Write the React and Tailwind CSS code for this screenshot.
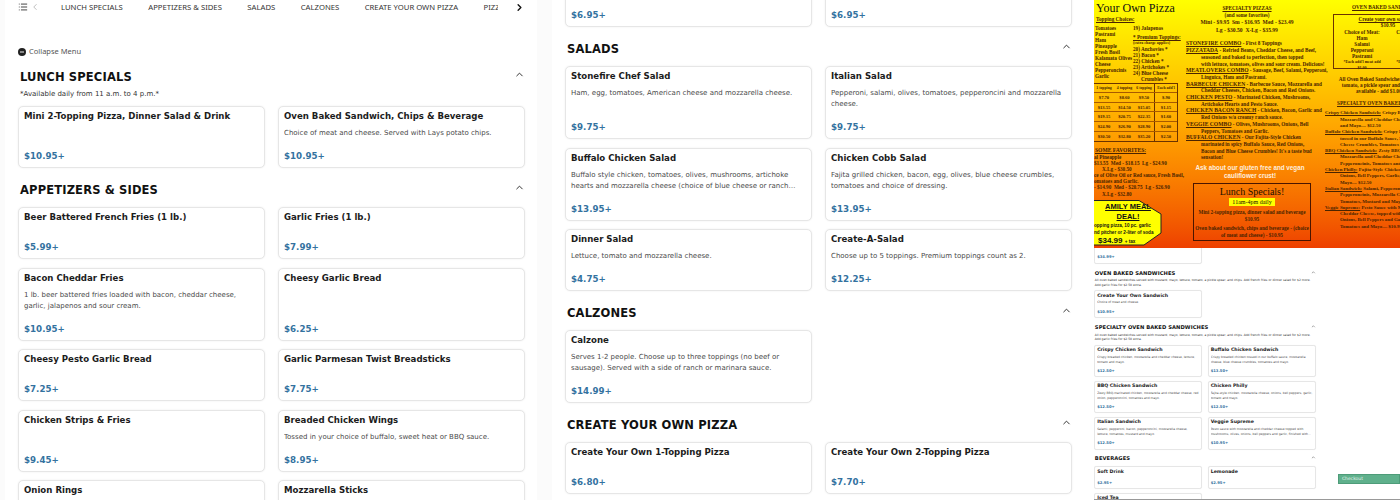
import { ChevronLeft, ChevronRight, ChevronUp, List } from "lucide-react";

const navItems = ["LUNCH SPECIALS", "APPETIZERS & SIDES", "SALADS", "CALZONES", "CREATE YOUR OWN PIZZA", "PIZZAS"];

const appetizers = [
  { name: "Beer Battered French Fries (1 lb.)", price: "$5.99+" },
  { name: "Garlic Fries (1 lb.)", price: "$7.99+" },
  {
    name: "Bacon Cheddar Fries",
    desc: "1 lb. beer battered fries loaded with bacon, cheddar cheese, garlic, jalapenos and sour cream.",
    price: "$10.95+",
  },
  { name: "Cheesy Garlic Bread", price: "$6.25+" },
  { name: "Cheesy Pesto Garlic Bread", price: "$7.25+" },
  { name: "Garlic Parmesan Twist Breadsticks", price: "$7.75+" },
  { name: "Chicken Strips & Fries", price: "$9.45+" },
  { name: "Breaded Chicken Wings", desc: "Tossed in your choice of buffalo, sweet heat or BBQ sauce.", price: "$8.95+" },
  { name: "Onion Rings", price: "$6.95+" },
  { name: "Mozzarella Sticks", price: "$6.95+" },
];

const salads = [
  { name: "Stonefire Chef Salad", desc: "Ham, egg, tomatoes, American cheese and mozzarella cheese.", price: "$9.75+" },
  { name: "Italian Salad", desc: "Pepperoni, salami, olives, tomatoes, pepperoncini and mozzarella cheese.", price: "$9.75+" },
  {
    name: "Buffalo Chicken Salad",
    desc: "Buffalo style chicken, tomatoes, olives, mushrooms, artichoke hearts and mozzarella cheese (choice of blue cheese or ranch dressing).",
    price: "$13.95+",
  },
  {
    name: "Chicken Cobb Salad",
    desc: "Fajita grilled chicken, bacon, egg, olives, blue cheese crumbles, tomatoes and choice of dressing.",
    price: "$13.95+",
  },
  { name: "Dinner Salad", desc: "Lettuce, tomato and mozzarella cheese.", price: "$4.75+" },
  { name: "Create-A-Salad", desc: "Choose up to 5 toppings. Premium toppings count as 2.", price: "$12.25+" },
];

const sandwichNote =
  "All oven baked sandwiches served with mustard, mayo, lettuce, tomato, a pickle spear, and chips. Add french fries or dinner salad for $2 more. Add garlic fries for $2.50 extra.";

const specialtySandwiches = [
  { name: "Crispy Chicken Sandwich", desc: "Crispy breaded chicken, mozzarella and cheddar cheese, lettuce, tomato and mayo.", price: "$12.50+" },
  { name: "Buffalo Chicken Sandwich", desc: "Crispy breaded chicken tossed in our buffalo sauce, mozzarella cheese, blue cheese crumbles, tomatoes and mayo.", price: "$13.50+" },
  { name: "BBQ Chicken Sandwich", desc: "Zesty BBQ-marinated chicken, mozzarella and cheddar cheese, red onion, pepperoncini, tomatoes and mayo.", price: "$12.50+" },
  { name: "Chicken Philly", desc: "Fajita-style chicken, mozzarella cheese, onions, bell peppers, garlic, tomato and mayo.", price: "$12.50+" },
  { name: "Italian Sandwich", desc: "Salami, pepperoni, bacon, pepperoncini, mozzarella cheese, lettuce, tomatoes, mustard and mayo.", price: "$12.50+" },
  { name: "Veggie Supreme", desc: "Pesto sauce with mozzarella and cheddar cheese topped with mushrooms, olives, onions, bell peppers and garlic, finished with tomatoes and mayo.", price: "$10.95+" },
];

const toppingsLeft = ["Tomatoes", "Pastrami", "Ham", "Pineapple", "Fresh Basil", "Kalamata Olives", "Cheese", "Pepperoncinis", "Garlic"];
const priceRows = [
  ["1 topping", "4 topping", "6 topping", "Each add'l"],
  ["$7.70", "$8.60", "$9.50", "$.90"],
  ["$13.55", "$14.50", "$15.05", "$1.15"],
  ["$19.15", "$20.75", "$22.35", "$1.60"],
  ["$24.90", "$26.90", "$28.90", "$2.00"],
  ["$30.50", "$32.80", "$35.20", "$2.50"],
];

const pizzaLines = [
  ["STONEFIRE COMBO", " - First 8 Toppings"],
  ["PIZZATADA", " - Refried Beans, Cheddar Cheese, and Beef,", "seasoned and baked to perfection, then topped", "with lettuce, tomatoes, olives and sour cream.  Delicious!"],
  ["MEATLOVERS COMBO", " - Sausage, Beef, Salami, Pepperoni,", "Linguica, Ham and Pastrami."],
  ["BARBECUE CHICKEN", " - Barbecue Sauce, Mozzarella and", "Cheddar Cheeses, Chicken, Bacon and Red Onions."],
  ["CHICKEN PESTO", " - Marinated Chicken, Mushrooms,", "Artichoke Hearts and Pesto Sauce."],
  ["CHICKEN BACON RANCH", " - Chicken, Bacon, Garlic and", "Red Onions w/a creamy ranch sauce."],
  ["VEGGIE COMBO", " - Olives, Mushrooms, Onions, Bell", "Peppers, Tomatoes and Garlic."],
  ["BUFFALO CHICKEN", " - Our Fajita-Style Chicken", "marinated in spicy Buffalo Sauce, Red Onions,", "Bacon and Blue Cheese Crumbles! It's a taste bud", "sensation!"],
];

const sandwichLines = [
  ["Crispy Chicken Sandwich:", " Crispy Breaded Chicken,", "Mozzarella and Cheddar Cheese, Lettuce,", "and Mayo.... $12.50"],
  ["Buffalo Chicken Sandwich:", " Crispy Breaded,", "tossed in our Buffalo Sauce, Mozzarella,", "Cheese Crumbles, Tomatoes and"],
  ["BBQ Chicken Sandwich:", " Zesty BBQ Chicken,", "Mozzarella and Cheddar Cheese,", "Pepperoncinis, Tomatoes and"],
  ["Chicken Philly:", " Fajita-Style Chicken, Mozzarella,", "Onions, Bell Peppers, Garlic, Tomatoes", "Mayo.... $12.50"],
  ["Italian Sandwich:", " Salami, Pepperoni, Bacon,", "Pepperoncinis, Mozzarella Cheese,", "Tomatoes, Mustard and Mayo...."],
  ["Veggie Supreme:", " Pesto Sauce with Mozzarella,", "Cheddar Cheese, topped with", "Onions, Bell Peppers and Garlic", "Tomatoes and Mayo.... $10.95"],
];

function Card({ item, thumb }) {
  return (
    <div className="flex min-h-[52px] flex-col rounded-[5px] border border-[#e6e6e6] bg-white px-[5px] pt-[3px] pb-[4px] shadow-[0_0_2px_rgba(0,0,0,0.08)]">
      <h3 className={`mb-[6px] leading-[12px] font-bold text-[#1c1c1c] ${thumb ? "text-[10.9px]" : "text-[8.6px]"}`}>{item.name}</h3>
      {item.desc && <p className="line-clamp-2 text-[7px] leading-[11px] text-[#4a4a4a]">{item.desc}</p>}
      <div className="mt-auto pt-[11px] text-[8.7px] leading-[13px] font-bold text-[#34729f]">{item.price}</div>
    </div>
  );
}

function Section({ title, note, items, thumb }) {
  return (
    <section className="mt-[13.5px]">
      <div className="flex items-start justify-between pl-[2px]">
        <h2 className={`leading-[17px] font-bold tracking-[0.15px] text-[#111] ${thumb ? "text-[12.1px]" : "text-[11.5px]"}`}>{title}</h2>
        <ChevronUp size={11} strokeWidth={2} className="text-[#222]" />
      </div>
      {note && <p className="mt-[3px] pl-[2px] text-[7px] leading-[11px] text-[#333]">{note}</p>}
      <div className={`grid grid-cols-2 gap-y-[8.5px] ${thumb ? "gap-x-[12px]" : "gap-x-[13px]"} ${note ? "mt-[6.5px]" : "mt-[8.5px]"}`}>
        {items.map((item) => (
          <Card key={item.name} item={item} thumb={thumb} />
        ))}
      </div>
    </section>
  );
}

function Poster() {
  return (
    <div className="flex h-[248px] shrink-0 overflow-hidden bg-gradient-to-b from-[#ffff00] via-[#ffa800] to-[#ee4000] font-['Liberation_Serif',serif] text-[5.2px] leading-[6.7px] font-bold text-[#4a2400]">
      {/* create your own pizza */}
      <div className="relative w-[91px] shrink-0 overflow-hidden">
        <div className="mt-[1px] pl-[2px] text-[12px] leading-[14px] font-normal whitespace-nowrap text-[#111]">Your Own Pizza</div>
        <div className="mt-[1px] pl-[2px] underline">Topping Choices:</div>
        <div className="mt-[2px] flex pl-[1px] leading-[6px]">
          <div className="w-[38px] shrink-0 whitespace-nowrap">
            {toppingsLeft.map((t) => (
              <div key={t}>{t}</div>
            ))}
          </div>
          <div className="whitespace-nowrap">
            <div>19) Jalapenos</div>
            <div className="mt-[3px] underline">* Premium Toppings:</div>
            <div className="text-[4px]">(extra charge applies)</div>
            <div>20) Anchovies *</div>
            <div>21) Bacon *</div>
            <div>22) Chicken *</div>
            <div>23) Artichokes *</div>
            <div>24) Blue Cheese</div>
            <div className="pl-[8px]">Crumbles *</div>
          </div>
        </div>
        <div className="mt-[1px] ml-[-2px] w-[86px] border border-[#6b3300] text-[4.6px] leading-[9px]">
          {priceRows.map((row, i) => (
            <div key={i} className={`flex h-[9.6px] text-center ${i === 0 ? "text-[3.8px]" : ""} border-b border-[#a85a00] last:border-b-0`}>
              <div className="w-[22px]">{row[0]}</div>
              <div className="w-[19px]">{row[1]}</div>
              <div className="w-[21px] border-r border-[#6b3300]">{row[2]}</div>
              <div className="flex-1">{row[3]}</div>
            </div>
          ))}
        </div>
        <div className="mt-[5px] pl-[1px] text-[5.6px] whitespace-nowrap underline">SOME FAVORITES:</div>
        <div className="leading-[6.1px] whitespace-nowrap">
          <div>al Pineapple</div>
          <div>$13.55&nbsp; Med - $18.15&nbsp; Lg - $24.90</div>
          <div className="pl-[8px]">X.Lg - $30.50</div>
          <div>ce of Olive Oil or Red sauce, Fresh Basil,</div>
          <div>omatoes and Garlic.</div>
          <div>- $14.90&nbsp; Med - $20.75&nbsp; Lg - $26.90</div>
          <div className="pl-[8px]">X.Lg - $32.80</div>
        </div>
        {/* family meal badge */}
        <div className="absolute top-[200px] left-0 h-[46px] w-[68px]">
          <svg viewBox="0 0 68 46" className="absolute inset-0 h-full w-full">
            <polygon points="-3,0.5 45,0.5 67,14 67,33 50,45 -3,45" fill="#ffff00" stroke="#222" strokeWidth="1" />
          </svg>
          <div className="relative pt-[2px] text-center font-['Liberation_Sans',sans-serif] whitespace-nowrap text-[#111]">
            <div className="text-[7.5px] leading-[10px] underline">AMILY MEAL</div>
            <div className="text-[7.5px] leading-[10px] underline">DEAL!</div>
            <div className="text-left text-[4.6px] leading-[7px]">opping pizza, 10 pc. garlic</div>
            <div className="text-left text-[4.6px] leading-[7px]">nd pitcher or 2-liter of soda</div>
            <div className="pl-[4px] text-left text-[8px] leading-[10px]">
              $34.99 <span className="text-[4.6px]">+ tax</span>
            </div>
          </div>
        </div>
      </div>

      {/* specialty pizzas */}
      <div className="w-[137px] shrink-0 pl-[1px]">
        <div className="mt-[5px] pr-[14px] text-center">
          <div className="underline">SPECIALTY PIZZAS</div>
          <div>(and some favorites)</div>
          <div className="mt-[1px] text-[5.6px] leading-[7.5px]">Mini - $9.95 &nbsp;Sm - $16.95 &nbsp;Med - $23.49</div>
          <div className="text-[5.6px] leading-[7.5px]">Lg - $30.50 &nbsp;X-Lg - $35.99</div>
        </div>
        <div className="mt-[6px] whitespace-nowrap">
          {pizzaLines.map(([head, first, ...rest]) => (
            <div key={head}>
              <div>
                <span className="text-[5.6px] underline">{head}</span>
                {first}
              </div>
              {rest.map((line) => (
                <div key={line} className="pl-[15px]">
                  {line}
                </div>
              ))}
            </div>
          ))}
        </div>
        <div className="mt-[3px] pr-[8px] text-center font-['Liberation_Sans',sans-serif] text-[6.3px] leading-[7.5px] text-[#ffeedd]">
          <div>Ask about our gluten free and vegan</div>
          <div>cauliflower crust!</div>
        </div>
        <div className="mt-[4px] ml-[7px] flex h-[58px] w-[118px] flex-col items-center border border-[#4a1500] px-[2px] pt-[1px] text-center leading-[6.5px]">
          <div className="text-[10px] leading-[13px] font-normal text-[#221000]">Lunch Specials!</div>
          <div className="bg-[#ffff00] px-[3px] text-[6px] leading-[8px] font-normal text-[#221000]">11am-4pm daily</div>
          <div className="mt-[3px] whitespace-nowrap">Mini 2-topping pizza, dinner salad and beverage</div>
          <div>$10.95</div>
          <div className="mt-[3px] whitespace-nowrap">Oven baked sandwich, chips and beverage - (choice</div>
          <div>of meat and cheese) - $10.95</div>
        </div>
      </div>

      {/* oven baked sandwiches */}
      <div className="w-[165px] shrink-0 text-center">
        <div className="mt-[4px] pl-[30px] text-left whitespace-nowrap underline">OVEN BAKED SANDWICHES</div>
        <div className="mt-[3px] ml-[11px] h-[55px] w-[110px] border border-[#6b3300] pt-[1px] leading-[6px] whitespace-nowrap">
          <div className="underline">Create your own sandwich</div>
          <div>$10.95</div>
          <div className="flex">
            <div className="w-[56px]">
              <div className="mt-[1px]">Choice of Meat:</div>
              <div>Ham</div>
              <div>Salami</div>
              <div>Pepperoni</div>
              <div>Pastrami</div>
              <div className="text-[4px]">*Each add'l meat add</div>
              <div className="text-[4px]">$1.00</div>
            </div>
            <div className="flex-1">
              <div className="mt-[1px]">Choice of Cheese:</div>
              <div className="mt-[24px] text-[4px]">*Each add'l cheese add</div>
            </div>
          </div>
        </div>
        <div className="mt-[7px] ml-[5px] w-[130px] text-[5.2px] leading-[6px]">
          <div className="whitespace-nowrap">All Oven Baked Sandwiches served with lettuce,</div>
          <div className="whitespace-nowrap">tomato, a pickle spear and chips. French fries</div>
          <div className="whitespace-nowrap">available - add $1.00 Garlic fries</div>
        </div>
        <div className="mt-[6px] pl-[15px] text-left whitespace-nowrap underline">SPECIALTY OVEN BAKED SANDWICHES</div>
        <div className="mt-[4px] pl-[3px] text-left text-[4.9px] leading-[6.3px] whitespace-nowrap">
          {sandwichLines.map(([head, first, ...rest]) => (
            <div key={head}>
              <div>
                <span className="underline">{head}</span>
                {first}
              </div>
              {rest.map((line) => (
                <div key={line} className="pl-[15px]">
                  {line}
                </div>
              ))}
            </div>
          ))}
        </div>
      </div>
    </div>
  );
}

export default function App() {
  return (
    <div className="flex h-[500px] w-[1400px] overflow-hidden bg-[#fbfbfb] font-['DejaVu_Sans',sans-serif]">
      {/* first menu view */}
      <div className="ml-[5px] h-full w-[532px] shrink-0 overflow-hidden bg-white pr-[12px] pl-[13px]">
        <div className="flex h-[14px] items-center">
          <List size={10} strokeWidth={2} className="shrink-0 text-[#222]" />
          <ChevronLeft size={10} strokeWidth={1.5} className="ml-[2px] shrink-0 text-[#999]" />
          <nav className="ml-[21px] flex w-[437px] gap-[25.5px] overflow-hidden font-['Noto_Sans',sans-serif] text-[7.7px] leading-[14px] whitespace-nowrap text-[#333]">
            {navItems.map((n) => (
              <span key={n}>{n}</span>
            ))}
          </nav>
          <ChevronRight size={11} strokeWidth={3} className="ml-[16px] shrink-0 text-[#111]" />
        </div>
        <div className="mt-[33px] mb-[-2px] flex h-[10px] items-center gap-[3px] font-['Noto_Sans',sans-serif] text-[7.5px] text-[#555]">
          <svg viewBox="0 0 8 8" className="h-[8px] w-[8px]">
            <circle cx="4" cy="4" r="4" fill="#222" />
            <rect x="2" y="3" width="4" height="2" fill="#888" />
          </svg>
          Collapse Menu
        </div>
        <Section
          title="LUNCH SPECIALS"
          note="*Available daily from 11 a.m. to 4 p.m.*"
          items={[
            { name: "Mini 2-Topping Pizza, Dinner Salad & Drink", price: "$10.95+" },
            { name: "Oven Baked Sandwich, Chips & Beverage", desc: "Choice of meat and cheese. Served with Lays potato chips.", price: "$10.95+" },
          ]}
        />
        <Section title="APPETIZERS & SIDES" items={appetizers} />
      </div>

      {/* second menu view, scrolled down */}
      <div className="ml-[15px] h-full w-[542px] shrink-0 overflow-hidden bg-white pr-[22px] pl-[13px]">
        <div className="-mt-[25px] grid grid-cols-2 gap-x-[13px]">
          <Card item={appetizers[8]} />
          <Card item={appetizers[9]} />
        </div>
        <Section title="SALADS" items={salads} />
        <Section title="CALZONES" items={[{ name: "Calzone", desc: "Serves 1-2 people. Choose up to three toppings (no beef or sausage). Served with a side of ranch or marinara sauce.", price: "$14.99+" }]} />
        <Section
          title="CREATE YOUR OWN PIZZA"
          items={[
            { name: "Create Your Own 1-Topping Pizza", price: "$6.80+" },
            { name: "Create Your Own 2-Topping Pizza", price: "$7.70+" },
          ]}
        />
      </div>

      {/* third view, full page thumbnail */}
      <div className="flex h-full w-[306px] shrink-0 flex-col overflow-hidden border-b border-[#999] bg-white">
        <Poster />
        <div className="flex min-h-0 flex-1">
          <div className="w-[530px] shrink-0 overflow-hidden [zoom:0.43]">
            <div className="-mt-[17px] grid w-[516px] grid-cols-2 gap-x-[12px]">
              <Card thumb item={{ name: "Family Meal Deal", price: "$34.99+" }} />
            </div>
            <div className="w-[516px]">
              <Section thumb title="OVEN BAKED SANDWICHES" note={sandwichNote} items={[{ name: "Create Your Own Sandwich", desc: "Choice of meat and cheese.", price: "$10.95+" }]} />
              <Section thumb title="SPECIALTY OVEN BAKED SANDWICHES" note={sandwichNote} items={specialtySandwiches} />
              <Section
                thumb
                title="BEVERAGES"
                items={[
                  { name: "Soft Drink", price: "$2.95+" },
                  { name: "Lemonade", price: "$2.95+" },
                  { name: "Iced Tea", price: "$2.95+" },
                ]}
              />
            </div>
          </div>
          <div className="ml-[10px] flex flex-1 flex-col justify-end bg-white pb-[15px] pl-[6px]">
            <div className="h-[10px] border border-[#4e9c79] bg-[#5fb08c] pl-[3px] text-[4.5px] leading-[8px] text-[#e8f5ee]">Checkout</div>
          </div>
        </div>
      </div>
    </div>
  );
}
